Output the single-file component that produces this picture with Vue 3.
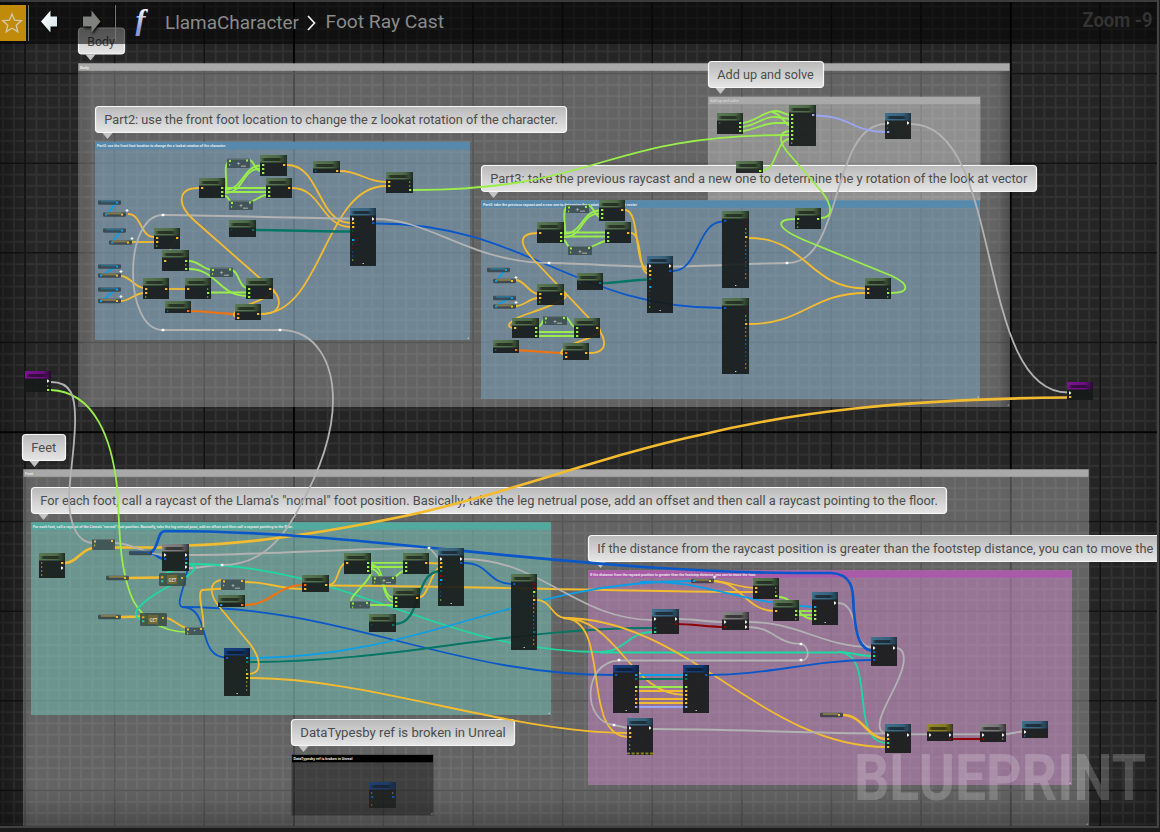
<script setup>
const COLORS = {
  w: '#f4f4f4', o: '#f3bb30', g: '#9aee4a', b: '#0a57c9', c: '#0b9fe8', t: '#057565',
  e: '#1fd9a2', r: '#8d0507', n: '#f4720c', p: '#98a6f5', s: '#b2b2b2', v: '#7a4da0',
}

const majorX = Array.from({ length: 13 }, (_, i) => ({ p: 25.2 + i * 89.6, strong: i === 3 || i === 11 }))
const majorY = Array.from({ length: 9 }, (_, i) => ({ p: 73.8 + i * 89.6, strong: i === 4 }))

const comments = [
  { x: 78, y: 63, w: 932, h: 344, kind: 'plain', t: 'Body', tl: 9 },
  { x: 708, y: 96.5, w: 272.5, h: 104, kind: 'plain inner', t: 'Add up and solve', tl: 29 },
  { x: 95, y: 141.5, w: 375, h: 198.5, kind: 'sky', t: 'Part2: use the front foot location to change the z lookat rotation of the character.', tl: 129 },
  { x: 481, y: 200, w: 499, h: 199, kind: 'sky', t: 'Part3: take the previous raycast and a new one to determine the y rotation of the look at vector', tl: 154 },
  { x: 23, y: 469, w: 1066, h: 357, kind: 'plain', t: 'Feet', tl: 8 },
  { x: 31, y: 522, w: 520, h: 193, kind: 'sea', t: 'For each foot, call a raycast of the Llama\'s "normal" foot position. Basically, take the leg netrual pose, add an offset and then call a raycast pointing to the floor.', tl: 260 },
  { x: 588, y: 570, w: 484, h: 215, kind: 'plum', t: 'If the distance from the raycast position is greater than the footstep distance, you can to move the foot.', tl: 166 },
  { x: 291.5, y: 754.5, w: 142, h: 61, kind: 'ink', t: 'DataTypesby ref is broken in Unreal', tl: 59 },
]

const bubbles = [
  { x: 78.5, y: 28, w: 46, t: 'Body', tl: 27.5 },
  { x: 708.5, y: 61.5, w: 115, t: 'Add up and solve', tl: 96.5 },
  { x: 95.5, y: 106.5, w: 471, t: 'Part2: use the front foot location to change the z lookat rotation of the character.', tl: 453.5 },
  { x: 481.5, y: 165.5, w: 555, t: 'Part3: take the previous raycast and a new one to determine the y rotation of the look at vector', tl: 537 },
  { x: 22.5, y: 434.5, w: 43, t: 'Feet', tl: 25 },
  { x: 31.5, y: 487.5, w: 915, t: 'For each foot, call a raycast of the Llama\'s "normal" foot position. Basically, take the leg netrual pose, add an offset and then call a raycast pointing to the floor.', tl: 897.5 },
  { x: 588.5, y: 535.5, w: 620, t: 'If the distance from the raycast position is greater than the footstep distance, you can to move the', tl: 556 },
  { x: 291.5, y: 719.5, w: 223, t: 'DataTypesby ref is broken in Unreal', tl: 205.5 },
]

/* [colour, x1, y1, x2, y2, tangent, width] */
const links = [
  ['c', 117, 203, 107, 213, -3], ['c', 122, 231, 112, 241, -3], ['c', 117, 267, 101, 275, -3], ['c', 117, 289, 101, 301, -3],
  ['o', 128, 214, 154, 237, 14], ['o', 132, 242, 154, 242, 5], ['o', 121, 276, 144, 288, 9], ['o', 121, 301, 144, 293, 9], ['o', 169, 289, 186, 289, 5],
  ['o', 176, 239, 164, 261, 3, 1], ['o', 261, 314, 386, 186, 62],
  ['o', 287, 165, 351, 223, 34], ['o', 292, 188, 351, 227, 30], ['o', 340, 171, 386, 182, 20],
  ['g', 225, 188, 266, 188, 10], ['g', 225, 192, 266, 192, 10], ['g', 225, 190, 261, 165.5, 18], ['g', 225, 193, 261, 168.5, 20],
  ['g', 249, 160, 260, 171, 5], ['g', 225, 196, 233, 203, 4], ['g', 249, 202, 266, 195, 5],
  ['t', 254, 230, 350, 231.5, 30, 2.3],
  ['g', 189, 261, 213, 270, 10], ['g', 189, 269, 247, 296, 28], ['g', 231, 270, 247, 288, 8], ['g', 211, 292.5, 247, 292.5, 10],
  ['n', 191, 311, 236, 314, 10, 2.1], ['g', 413, 190, 789, 135, 188],
  ['s', 163, 215, 350, 218.5, 40], ['s', 548, 263, 647, 266.5, 30], ['s', 673, 266.5, 788, 263, 30],
  ['s', 788, 263, 886, 124, 56], ['s', 911, 124, 1068, 392.5, 94], ['s', 163, 330, 280, 330, 30],
  ['b', 376, 223.5, 723, 308, 150], ['b', 673, 271, 723, 221.5, 26],
  ['o', 516, 280, 538, 294, 8], ['o', 516, 306, 538, 298, 8], ['o', 625, 210, 649, 270, 16], ['o', 631, 233, 649, 274, 12],
  ['g', 564, 232.5, 605, 232.5, 10], ['g', 564, 236.5, 605, 236.5, 10], ['g', 564, 234, 600, 210.5, 18], ['g', 564, 237, 600, 213.5, 20],
  ['g', 588, 205, 600, 217, 5], ['g', 563, 240, 571, 248, 4], ['g', 589, 247, 606, 241, 5],
  ['g', 539, 326, 546, 318, 3], ['g', 565, 317, 575, 327, 4], ['g', 539, 332, 575, 332, 10], ['g', 539, 336, 575, 336, 10],
  ['c', 506, 270, 496, 280, -3], ['c', 511, 298, 496, 305, -3], ['n', 519, 350.5, 564, 353, 12, 2.1], ['t', 603, 283, 649, 279.5, 15, 2.3],
  ['o', 749, 238, 866, 288.5, 58], ['o', 749, 324, 866, 293, 55],
  ['g', 763, 170, 790, 139, 14], ['p', 816, 115.5, 886, 132, 34],
  ['o', 65, 563, 94, 548, 12, 2.4], ['o', 113, 547.5, 163, 547.5, 10, 2.4], ['b', 150, 553, 164, 559, 5, 2.5],
  ['s', 115, 543, 164, 555, 18], ['s', 188, 555, 429, 548, 70], ['s', 429, 548, 440, 559, 2], ['s', 188, 568, 222, 565, 12],
  ['b', 182, 607, 226, 657.5, 30], ['b', 182, 607, 614, 675, 165],
  ['e', 188, 564, 600, 652, 160], ['e', 600, 652.5, 838, 652.5, 30], ['e', 838, 652, 872, 656, 12], ['e', 838, 652, 887, 743, 40], ['e', 600, 652, 653, 632, 26],
  ['o', 128, 578, 161, 577.5, 5, 2.5], ['o', 119, 617, 142, 616.5, 5, 2.5], ['o', 165, 618, 188, 628, 9],
  ['o', 245, 582, 303, 589, 26], ['n', 245, 605, 303, 585, 26, 2.1], ['o', 329, 585, 347, 563, 10], ['o', 329, 585.5, 754, 592, 100],
  ['o', 250, 678, 629, 733, 120], ['c', 250, 658, 692, 581, 175], ['t', 250, 662, 653, 628, 150],
  ['g', 371, 562.8, 404, 562.8, 10], ['g', 371, 567, 404, 567, 10], ['g', 371, 565, 395, 598, 16], ['g', 371, 569, 395, 602, 14],
  ['g', 392, 578, 404, 571, 4], ['g', 367, 605, 394, 605, 5], ['o', 427, 563, 440, 563.5, 4], ['o', 420, 597, 440, 568, 8],
  ['t', 395, 624, 441, 571, 28, 2.3], ['s', 464, 559, 654, 620, 78], ['b', 464, 563, 513, 584, 26],
  ['o', 537, 600, 566, 618, 14], ['o', 563, 618, 629, 737, 50], ['o', 563, 618, 685, 695, 55], ['o', 563, 618, 887, 747, 125],
  ['s', 679, 619, 723, 622, 12], ['s', 749, 622, 872, 647, 50], ['s', 749, 627, 801, 644, 24], ['s', 801, 660.5, 619, 660.5, -30], ['s', 653, 729, 886, 733.5, 80],
  ['r', 677, 624, 724, 627, 12, 2.1], ['b', 709, 675, 872, 660, 60],
  ['c', 639, 675, 685, 675, 9], ['t', 639, 679, 685, 679, 9], ['g', 639, 687, 685, 687, 9, 2.1], ['o', 639, 691, 685, 691, 9],
  ['o', 639, 699, 685, 699, 9], ['o', 639, 703, 685, 703, 9], ['p', 639, 707, 685, 707, 9, 2.1],
  ['o', 712, 581, 755, 588, 15], ['o', 712, 581, 775, 611, 30], ['g', 779, 597, 813, 619, 16], ['g', 799, 611, 813, 611, 5], ['g', 799, 615, 813, 615, 5],
  ['s', 838, 603, 872, 647, 22], ['o', 843, 715, 887, 739, 20, 2.6],
  ['s', 911, 734.3, 928, 734.3, 5], ['s', 951, 734.3, 981, 734.3, 5], ['s', 1006, 734, 1023, 731.5, 5], ['r', 951, 739, 982, 739, 5, 2.1],
]
const wirePath = ([, x1, y1, x2, y2, d]) => `M${x1},${y1} C${x1 + d},${y1} ${x2 - d},${y2} ${x2},${y2}`

const curves = [
  ['o', 'M261,314 C285,314 281,297 271,288 L196,222 C175,204 178,188 199,188'],
  ['o', 'M272,289 C280,291 262,300 245,306 C230,312 233,317 237,317'],
  ['g', 'M226,188 C228,182 222,163 230,161'],
  ['s', 'M376,219 C430,219 470,262 548,263'],
  ['s', 'M163,215 C123,215 123,330 163,330'],
  ['s', 'M280,330 C318,330 333,365 333,400 C333,440 315,480 298,510 C278,547 255,565 222,565'],
  ['o', 'M589,353 C612,353 606,335 590,319 L533,259 C519,244 518,233 538,233'],
  ['o', 'M562,294 C572,296 562,302 530,313 C505,321 506,328 514,328'],
  ['o', 'M598,328 C606,332 590,338 575,343 C560,349 558,355 565,354'],
  ['g', 'M565,232 C566,226 561,208 568,206'],
  ['g', 'M891,293 C909,293 911,285 892,276 L804,240 C774,227 776,219 796,219'],
  ['g', 'M821,218 C834,218 832,205 822,192 L790,155 C778,142 778,131 790,131'],
  ['g', 'M743,123 C757,121 764,111 776,111 C782,111 785,115 790,115'],
  ['g', 'M743,127 C757,125 764,116 776,117 L790,119'],
  ['g', 'M743,131 C757,129 764,123 776,123 L790,123'],
  ['g', 'M772,112 C780,113 783,122 790,126'],
  ['g', 'M51,390 C95,392 112,440 117,487 C120,525 118,558 130,593 C138,616 160,632 187,632'],
  ['s', 'M51,382 C71,382 76,395 75,425 C74,455 69,480 69,500 C70,530 80,542 92,543'],
  ['o', 'M188,545.5 C250,544 330,531 390,519 C490,500 600,456 700,435 C790,413 900,399 1068,397.5', 2.6],
  ['b', 'M150,553 C160,548 156,532 165,531 C330,531 480,557 660,568 C740,573 780,573 831,573 C858,574 852,600 854,612 C856,638 861,650 873,651', 2.7],
  ['b', 'M188,560 C189,580 174,604 182,607'],
  ['e', 'M188,564 C200,566 195,573 175,583 C148,597 124,614 142,620'],
  ['e', 'M188,564 C194,566 160,572 162,577'],
  ['o', 'M203,630 C206,618 196,594 202,590 L223,588.5'],
  ['o', 'M223,580 C206,581 210,597 222,610 L250,644 C262,660 262,674 248,674'],
  ['c', 'M640,582 C700,579 740,603 813,607'],
  ['g', 'M371,573 C369,583 346,598 352,603'],
  ['s', 'M801,644 C809,645 811,661 801,660.5'],
  ['s', 'M619,660.5 C582,662 582,722 614,725 L628,728'],
  ['s', 'M897,648 C907,650 905,665 898,680 C890,700 868,730 887,734'],
]

const reroutes = [[163, 215], [163, 330], [280, 330], [549, 263], [787, 263], [222, 565], [429, 548], [619, 660], [801, 644], [801, 660], [614, 725]]
const marks = [[127, 210.5], [132, 238.5], [121, 271.5], [121, 296.5], [516, 277.5], [516, 302.5], [714.5, 577]]

/* [kind, x, y, w, h, pins]; pin = side, offset, colour, optional dim mark */
const nodes = [
  ['green', 199, 178, 26, 20, 'l10o r10g r14g r18g'], ['green', 260, 155, 27, 21, 'l10g l14g l18g r10o'], ['green', 266, 178, 26, 20, 'l10g l14g l18g r10o'],
  ['green', 229, 220, 27, 17, 'l10t- r10t'], ['green', 154, 228, 26, 21, 'l10o l14o l18g- r10o'], ['green', 162, 250, 27, 21, 'l11o r11g r15g- r19g'],
  ['green', 143, 278, 26, 21, 'l11o l15o l19g- r11o'], ['green', 185, 278, 26, 21, 'l11o r11g- r15g r19g-'], ['green', 246, 278, 27, 21, 'l11g l15g l19g r11o'],
  ['green', 165, 301, 26, 12, 'l10c- r10n'], ['green', 235, 304, 26, 16, 'l10n l14o r10o'], ['green', 313, 161, 27, 12, 'l10c- r10o'],
  ['green', 386, 172, 27, 21, 'l10o l14o r10g- r14g- r18g'],
  ['blue', 350, 208, 26, 58, 'l11w l15o l19o l23t- l27r- l32c l36t- l40r- l44b- l48b- l52g- r11w r15b r19r- f'],
  ['green', 599, 200, 26, 21, 'l10g l14g l18g r10o'], ['green', 537, 222, 27, 21, 'l11o r11g r15g r19g'], ['green', 605, 222, 26, 21, 'l11g l15g l19g r11o'],
  ['green', 537, 284, 27, 21, 'l10o l14o l18g- r10o'], ['green', 577, 273, 26, 17, 'l10t- r10t'],
  ['blue', 647, 256, 26, 57, 'l10w l15o l19o l23t l27r- l31c l35t- l39r- l43b- l47b- l51g- r10w r15b r19r- f'],
  ['green', 512, 318, 27, 20, 'l10o r10g r14g r18g'], ['green', 574, 318, 26, 20, 'l10g l14g l18g r10o'], ['green', 493, 340, 26, 13, 'l10c- r10n'], ['green', 563, 343, 26, 17, 'l10n l14o r10o'],
  ['green', 722, 211, 27, 77, 'l10b r10r- r14r- r18g- r22g- r26o r31o- r35o- r39c- r43c- r47b- r51v- r55t- r59t- r63o- r67o- f'],
  ['green', 722, 298, 27, 76, 'l10b r10r- r14r- r18g- r22g- r26o r30o- r34o- r38o- r42c- r46c- r50b- r54v- r58t- r62t- r66o- r70o- f'],
  ['green', 795, 208, 26, 21, 'l11g l15g- l19g- r11g'], ['green', 865, 278, 26, 21, 'l11o l15o r11g- r15g r19g-'],
  ['green', 717, 113, 26, 21, 'l10c- r10g r14g r18g'], ['green', 789, 105, 27, 41, 'l10g l14g l18g l22g l26g l30g l34g l38g- r10p'], ['green', 736, 161, 27, 12, 'r10g'],
  ['blue', 885, 113, 26, 26, 'l10w l15c- l19p l23r- r10w r15r-'],
  ['purple', 25, 371, 26, 21, 'r10w r15g- r19g'], ['purple', 1067, 382, 26, 18, 'l11w l15o'],
  ['green', 39, 553, 26, 25, 'l10o- l14o- l18o- l22o- r10o r15w'], ['gray', 162, 544, 27, 27, 'l11w l15b r11w r15b r19e r23w'],
  ['green', 218, 595, 27, 12, 'l10c r10n'], ['green', 302, 575, 27, 17, 'l10n l14o r10o'],
  ['navy', 224, 648, 26, 48, 'l10b r10c r14t r18r- r22g- r26o r30o r34o- r38o- r42p- f'],
  ['green', 344, 553, 27, 21, 'l10o r10g r14g r18g'], ['green', 403, 553, 26, 21, 'l10g l14g l18g r10o'], ['green', 393, 588, 27, 20, 'l10g l14g l18g r10o'], ['green', 369, 614, 27, 18, 'l11t- r11t'],
  ['blue', 438, 548, 26, 58, 'l11w l15o l19o l23t l28r l32c l36t- l40r- l44b- l48b- l52g- r11w r15b r19r- f'],
  ['green', 511, 574, 26, 76, 'l10b r10r r14r r18g r22g- r26o r30o- r34o- r38o- r42c- r46c- r50v- r54v- r58t r62t- r66o- r70o- f'],
  ['green', 753, 578, 26, 21, 'l10o l14o r10g- r14g- r18g'], ['green', 773, 600, 26, 21, 'l11o r11g r15g r19g-'],
  ['blue', 812, 592, 26, 33, 'l15c l19g l23g l27g r11w f'], ['blue', 652, 609, 27, 25, 'l10w l15b- l19t l23e r10w r15r'], ['gray', 722, 612, 27, 18, 'l10w l15r r10w r15w'],
  ['navy', 613, 665, 26, 48, 'l10b r10c r14t r18r- r22g r26o r30o- r34o r38o r42p f'], ['navy', 683, 665, 26, 48, 'l10c l14t l18r- l22g l26o l30o l34o l38o l42p r10b f'],
  ['blue', 627, 718, 26, 37, 'l10w l15o l19o l23b- l27g- l31g- r10w'],
  ['blue', 871, 637, 26, 29, 'l11w l15b l19e l23b l27r- r11w'], ['blue', 885, 724, 26, 29, 'l11w l15o l19e l23o l27r- r11w'],
  ['yellow', 927, 724, 26, 17, 'l11w r11w r15r'], ['gray', 980, 724, 26, 18, 'l11w l15r r11w r15s-'], ['blue', 1022, 721, 26, 17, 'l11w l15c-'],
  ['navy faded', 369, 782, 27, 26, 'l11s- l15b l19r- l23n- r11s- r15b'],
].map(([kinds, x, y, w, h, spec]) => {
  const parts = spec.split(' ')
  const [kind, faded] = kinds.split(' ')
  return {
    kind, faded, x, y, w, h,
    foot: parts.includes('f'),
    pins: parts.filter((p) => p !== 'f').map((p) => {
      const m = p.match(/^([lr])(\d+)(\w)(-?)$/)
      return { x: m[1] === 'l' ? x + 2 : x + w - 4, y: y + +m[2], c: COLORS[m[3]], dim: m[4] === '-', exec: m[3] === 'w' }
    }),
  }
})

/* compact math nodes: [x, y, w, h, left pin colour, right pin colour, glyph] */
const minis = [
  [227, 158.5, 23, 9.5, 'g', 'g', '+'], [229, 200.5, 24, 9.5, 'g', 'g', '+'], [210, 267.5, 23, 9.5, 'g', 'g', '+'],
  [566, 205, 23, 8, 'g', 'g', '+'], [568, 246, 24, 9, 'g', 'g', '+'], [543, 316, 24, 9, 'g', 'g', '+'],
  [92, 539, 23, 11, 'o', 'o', ''], [185, 627, 19, 8, 'o', 'o', '•'], [221, 579, 24, 11, 'o', 'o', '+'],
  [372, 576, 24, 8.5, 'g', 'g', '+'], [350, 601, 20, 7.5, 'g', 'g', '-'],
]
const getters = [[159, 573], [140, 613]]

/* variable pills: [x, y, tint] */
const pills = [
  [98, 200, 'c'], [103, 212, 'o'], [103, 228, 'c'], [109, 240, 'o'], [98, 264, 'c'], [98, 273, 'o'], [98, 287, 'c'], [98, 298.5, 'o'],
  [487, 267.5, 'c'], [493, 278.5, 'o'], [493, 295.5, 'c'], [493, 304, 'o'],
  [129, 550.5, 'b'], [106, 575.5, 'o'], [98, 614.5, 'o'], [691, 578.5, 'o'], [820, 712.5, 'o'],
]
const doubled = (p) => p[2] === 'o' && (p[1] < 400 || p[0] === 691)
</script>

<template>
  <main class="editor">
    <svg class="graph" width="1160" height="832" viewBox="0 0 1160 832">
      <defs>
        <pattern id="grid" x="25.2" y="73.8" width="11.2" height="11.2" patternUnits="userSpaceOnUse">
          <rect width="11.2" height="11.2" fill="#252525" />
          <rect x="0" y="0" width="1" height="11.2" fill="#323232" />
          <rect x="10.2" y="0" width="1" height="11.2" fill="#323232" />
          <rect x="0" y="0" width="11.2" height="1" fill="#323232" />
          <rect x="0" y="10.2" width="11.2" height="1" fill="#323232" />
        </pattern>
        <linearGradient id="bubble" x1="0" y1="0" x2="0" y2="1"><stop offset="0" stop-color="#b9b9b9" /><stop offset="1" stop-color="#e6e6e6" /></linearGradient>
        <linearGradient id="green"><stop offset="0" stop-color="#5a7853" /><stop offset=".7" stop-color="#4c6848" /><stop offset="1" stop-color="#1f2c20" /></linearGradient>
        <linearGradient id="blue"><stop offset="0" stop-color="#3f708d" /><stop offset=".7" stop-color="#37617c" /><stop offset="1" stop-color="#1d3340" /></linearGradient>
        <linearGradient id="navy"><stop offset="0" stop-color="#15407f" /><stop offset=".7" stop-color="#123a74" /><stop offset="1" stop-color="#0f1e38" /></linearGradient>
        <linearGradient id="gray"><stop offset="0" stop-color="#858585" /><stop offset=".7" stop-color="#777" /><stop offset="1" stop-color="#333" /></linearGradient>
        <linearGradient id="yellow"><stop offset="0" stop-color="#968a28" /><stop offset=".7" stop-color="#857a20" /><stop offset="1" stop-color="#3b3714" /></linearGradient>
        <linearGradient id="purple"><stop offset="0" stop-color="#7d1192" /><stop offset=".7" stop-color="#6b0f80" /><stop offset="1" stop-color="#250a2c" /></linearGradient>
        <linearGradient id="shadeL"><stop offset="0" stop-color="#000" stop-opacity=".35" /><stop offset="1" stop-color="#000" stop-opacity="0" /></linearGradient>
        <linearGradient id="shadeR"><stop offset="0" stop-color="#000" stop-opacity="0" /><stop offset="1" stop-color="#000" stop-opacity=".3" /></linearGradient>
        <linearGradient id="shadeB" x1="0" y1="0" x2="0" y2="1"><stop offset="0" stop-color="#000" stop-opacity="0" /><stop offset="1" stop-color="#000" stop-opacity=".25" /></linearGradient>
        <filter id="soft" x="-20%" y="-50%" width="140%" height="200%"><feGaussianBlur stdDeviation="1.3 .7" /></filter>
      </defs>

      <rect width="1160" height="832" fill="url(#grid)" />
      <rect v-for="l in majorX" :key="'x' + l.p" :x="l.p - 1" y="0" :width="l.strong ? 2 : 1.7" height="832" :fill="l.strong ? '#040404' : '#131313'" />
      <rect v-for="l in majorY" :key="'y' + l.p" x="0" :y="l.p - 1" width="1160" :height="l.strong ? 2 : 1.7" :fill="l.strong ? '#040404' : '#131313'" />

      <g v-for="c in comments" :key="c.t + c.x" :class="['comment', c.kind]">
        <rect class="body" :x="c.x" :y="c.y" :width="c.w" :height="c.h" />
        <rect class="head" :x="c.x + .5" :y="c.y + .5" :width="c.w - 1" height="7.3" />
        <text :x="c.x + 2" :y="c.y + 5.8" :textLength="c.tl" lengthAdjust="spacingAndGlyphs">{{ c.t }}</text>
        <path class="grip" :d="`M${c.x + c.w - 1},${c.y + c.h - 3} v2 h-2 z`" />
      </g>
      <rect x="0" y="0" width="30" height="826" fill="url(#shadeL)" />
      <rect x="78" y="71" width="14" height="336" fill="url(#shadeL)" opacity=".35" />
      <rect x="996" y="71" width="14" height="336" fill="url(#shadeR)" opacity=".8" />
      <rect x="1130" y="0" width="27" height="826" fill="url(#shadeR)" opacity=".5" />
      <rect x="0" y="790" width="1157" height="37" fill="url(#shadeB)" />

      <g v-for="b in bubbles" :key="'b' + b.t" class="bubble">
        <path :d="`M${b.x + 7},${b.y + 26.5} h10 l-5,6 z`" />
        <rect :x="b.x" :y="b.y" :width="b.w" height="26" rx="3.5" />
        <text :x="b.x + 8.8" :y="b.y + 17.5" :textLength="b.tl" lengthAdjust="spacingAndGlyphs">{{ b.t }}</text>
      </g>

      <g class="wires">
        <path v-for="(l, i) in links" :key="'l' + i" :d="wirePath(l)" :stroke="COLORS[l[0]]" :stroke-width="l[6] || 1.8" />
        <path v-for="(c, i) in curves" :key="'c' + i" :d="c[1]" :stroke="COLORS[c[0]]" :stroke-width="c[2] || 1.8" />
      </g>
      <rect v-for="(r, i) in reroutes" :key="'r' + i" :x="r[0] - 1.3" :y="r[1] - 1.2" width="2.6" height="2.4" fill="#fff" />

      <g v-for="(n, i) in nodes" :key="'n' + i" :opacity="n.faded ? .75 : 1">
        <rect :x="n.x" :y="n.y" :width="n.w" :height="n.h" class="card" />
        <rect :x="n.x" :y="n.y" :width="n.w" height="7.5" :fill="`url(#${n.kind})`" />
        <rect :x="n.x + 3" :y="n.y + 3" :width="n.w - 9" height="3" fill="#0b110c" opacity=".6" filter="url(#soft)" />
        <g v-for="(p, k) in n.pins" :key="k" :opacity="p.dim ? .5 : 1">
          <path v-if="p.exec" :d="`M${p.x},${p.y - 1.5} h1 l1.3,1.5 l-1.3,1.5 h-1 z`" :fill="p.c" />
          <rect v-else :x="p.x" :y="p.y - 1" :width="p.dim ? 1.3 : 2.3" height="2" :fill="p.c" />
        </g>
        <rect v-if="n.foot" :x="n.x + n.w / 2 - .5" :y="n.y + n.h - 3" width="1.4" height="1" fill="#ccc" />
      </g>
      <path d="M627,753.5 H653" stroke="#8c8420" stroke-width="2" stroke-dasharray="3 1.6" />

      <g v-for="(m, i) in minis" :key="'m' + i" class="mini">
        <rect class="shell" :x="m[0]" :y="m[1]" :width="m[2]" :height="m[3]" rx="1" />
        <path :d="`M${m[0] + 1},${m[1] + .7} h${m[2] - 2}`" />
        <rect :x="m[0] + 2" :y="m[1] + 1.5" width="2" height="2" :fill="COLORS[m[4]]" />
        <rect :x="m[0] + 2" :y="m[1] + 5.5" width="1.2" height="1.8" :fill="COLORS[m[4]]" opacity=".8" />
        <rect :x="m[0] + m[2] - 4" :y="m[1] + 1" width="2" height="2" :fill="COLORS[m[5]]" />
        <text :x="m[0] + m[2] / 2" :y="m[1] + m[3] / 2 + 2">{{ m[6] }}</text>
        <rect v-if="m[6] === '+'" fill="#bbb" :x="m[0] + 14" :y="m[1] + m[3] - 2.3" width="5" height=".9" />
      </g>

      <g v-for="(g, i) in getters" :key="'g' + i" class="getter">
        <rect :x="g[0]" :y="g[1]" width="27" height="13" rx="1.5" />
        <rect class="band" :x="g[0] + 8" :y="g[1] + 2" width="10" height="9" />
        <rect class="o" :x="g[0] + 2" :y="g[1] + 3.3" width="2.4" height="2" />
        <rect class="e" :x="g[0] + 2" :y="g[1] + 7.3" width="2.4" height="2" />
        <rect class="o" :x="g[0] + 22" :y="g[1] + 4" width="2" height="2" />
        <text :x="g[0] + 13.5" :y="g[1] + 8.8" textLength="8" lengthAdjust="spacingAndGlyphs">GET</text>
      </g>

      <g v-for="(p, i) in pills" :key="'p' + i">
        <rect :x="p[0]" :y="p[1]" width="23" height="4.8" rx="1.5" fill="#2f3b41" fill-opacity=".8" />
        <rect :x="p[0] + 3" :y="p[1] + .6" width="15" height="1.8" :fill="COLORS[p[2]]" opacity=".4" />
        <path :d="`M${p[0] + 1},${p[1] + .3} h21`" stroke="#a9b6bb" stroke-width=".6" opacity=".5" />
        <rect :x="p[0] + 18" :y="p[1] + 1.5" width="2" height="2" :fill="COLORS[p[2]]" />
        <rect v-if="doubled(p)" :x="p[0] + 2" :y="p[1] + 1.5" width="2" height="2" :fill="COLORS.c" />
      </g>
      <path v-for="(m, i) in marks" :key="'k' + i" :d="`M${m[0] - 1.5},${m[1]} h3 M${m[0]},${m[1] - 1.5} v3`" stroke="#f2f2f2" stroke-width="1.1" />

      <text class="watermark" x="854" y="800" textLength="292" lengthAdjust="spacingAndGlyphs">BLUEPRINT</text>
      <rect x="1157" y="0" width="2" height="828" fill="#444" />
      <rect x="1159" y="0" width="1" height="832" fill="#1b1b1b" />
      <rect x="0" y="826" width="1159" height="2" fill="#414141" />
      <rect x="0" y="828" width="1160" height="4" fill="#1b1b1b" />
    </svg>

    <header class="toolbar">
      <button class="star">
        <svg width="22" height="22" viewBox="0 0 22 22"><path d="M11,2 L13.6,8.2 L20.3,8.8 L15.2,13.2 L16.8,19.7 L11,16.2 L5.2,19.7 L6.8,13.2 L1.7,8.8 L8.4,8.2 Z" fill="none" stroke="#d2c7a6" stroke-width="1.4" /></svg>
      </button>
      <i class="rule"></i>
      <svg class="arrow" width="18" height="24" viewBox="0 0 18 24">
        <defs><linearGradient id="ice" x1="0" y1="0" x2="1" y2="1"><stop offset="0" stop-color="#fff" /><stop offset="1" stop-color="#cfe4ea" /></linearGradient></defs>
        <path d="M0,11.5 L9.5,.5 V6.5 H16 V16.5 H9.5 V22.5 Z" fill="url(#ice)" />
      </svg>
      <svg class="arrow forward" width="18" height="24" viewBox="0 0 18 24"><path d="M17.5,11.5 L8.5,.5 V6.5 H0 V16.5 H8.5 V22.5 Z" fill="#80827f" /></svg>
      <i class="rule second"></i>
      <svg class="fn" width="24" height="34" viewBox="0 0 24 34">
        <defs><linearGradient id="fn" x1="0" y1="0" x2="0" y2="1"><stop offset=".2" stop-color="#f2f5ff" /><stop offset=".8" stop-color="#8799d8" /></linearGradient></defs>
        <text x="4.5" y="24" fill="url(#fn)">f</text>
      </svg>
      <nav class="crumbs">
        <svg width="290" height="32" viewBox="0 0 290 32">
          <text x="0" y="23" textLength="134" lengthAdjust="spacingAndGlyphs">LlamaCharacter</text>
          <path d="M143,10 L149.5,17 L143,24" fill="none" stroke="#f0f0f0" stroke-width="1.7" />
          <text x="160.5" y="22" textLength="118.5" lengthAdjust="spacingAndGlyphs">Foot Ray Cast</text>
        </svg>
      </nav>
      <svg class="zoom" width="72" height="32" viewBox="0 0 72 32"><text x="1.5" y="22" textLength="70" lengthAdjust="spacingAndGlyphs">Zoom -9</text></svg>
    </header>
  </main>
</template>

<style>
body { background: #252525; }
</style>

<style scoped>
.editor { position: relative; width: 1160px; height: 832px; overflow: hidden; font-family: Roboto, "Noto Sans", sans-serif; }
.graph { display: block; }
.plain .body { fill: rgba(255, 255, 255, .285); }
.plain .head { fill: #a9a9a9; }
.sky .body { fill: rgba(125, 168, 198, .5); }
.sky .head { fill: #5689ac; }
.sea .body { fill: rgba(118, 198, 186, .5); }
.sea .head { fill: #52a99d; }
.plum .body { fill: rgba(200, 134, 198, .5); }
.plum .head { fill: #aa5ba8; }
.ink .body { fill: rgba(0, 0, 0, .36); }
.ink .head { fill: #000; }
.comment text { font: bold 4.4px Roboto, sans-serif; fill: #e6e6e6; }
.comment.inner text { fill: #cfcfcf; }
.grip { fill: #ccc; opacity: .7; }
.bubble rect { fill: url(#bubble); stroke: #f7f7f7; stroke-width: 1.2; }
.bubble path { fill: #c4c4c4; }
.bubble text { font-size: 13.6px; fill: #4c4c4c; }
.wires { fill: none; }
.card { fill: #151918; fill-opacity: .9; }
.mini .shell { fill: #39494c; fill-opacity: .82; }
.mini path { stroke: #a5b1b3; stroke-width: .6; opacity: .6; }
.mini text { font-size: 6px; fill: #c3cccd; text-anchor: middle; }
.getter rect { fill: #3b4a42; fill-opacity: .85; }
.getter .band { fill: #746a2c; }
.getter .o { fill: #f7bb26; }
.getter .e { fill: #1fd9a2; }
.getter text { font: bold 5px Roboto, sans-serif; fill: #cfcfcf; text-anchor: middle; }
.watermark { font-size: 65px; font-weight: 700; fill: #fff; fill-opacity: .2; }
.toolbar { position: absolute; left: 0; top: 0; width: 1157px; height: 44px; box-sizing: border-box; border-top: 2px solid #3b3b3d; background: rgba(0, 0, 0, .56); display: flex; align-items: flex-start; }
.star { width: 26px; height: 36px; margin: 3px 0 0; padding: 0 3px 0 0; border: 0; background: #c08a0a; display: flex; align-items: center; justify-content: center; box-sizing: border-box; }
.rule { width: 1px; height: 36px; margin: 3px 0 0 2px; background: #777; }
.arrow { margin: 8px 0 0 12px; overflow: visible; filter: drop-shadow(1px 2px 1px rgba(0, 0, 0, .8)); }
.forward { margin-left: 24px; }
.rule.second { margin-left: 14px; }
.fn { margin: 4px 0 0 15px; overflow: visible; }
.fn text { font: italic bold 30px "Liberation Serif", serif; }
.crumbs { margin: 4px 0 0 10px; }
.crumbs text { font-size: 18.3px; fill: #8b8b8b; }
.zoom { margin: 3px 4px 0 auto; overflow: visible; }
.zoom text { font-size: 20px; font-weight: 700; fill: #333; }
</style>
